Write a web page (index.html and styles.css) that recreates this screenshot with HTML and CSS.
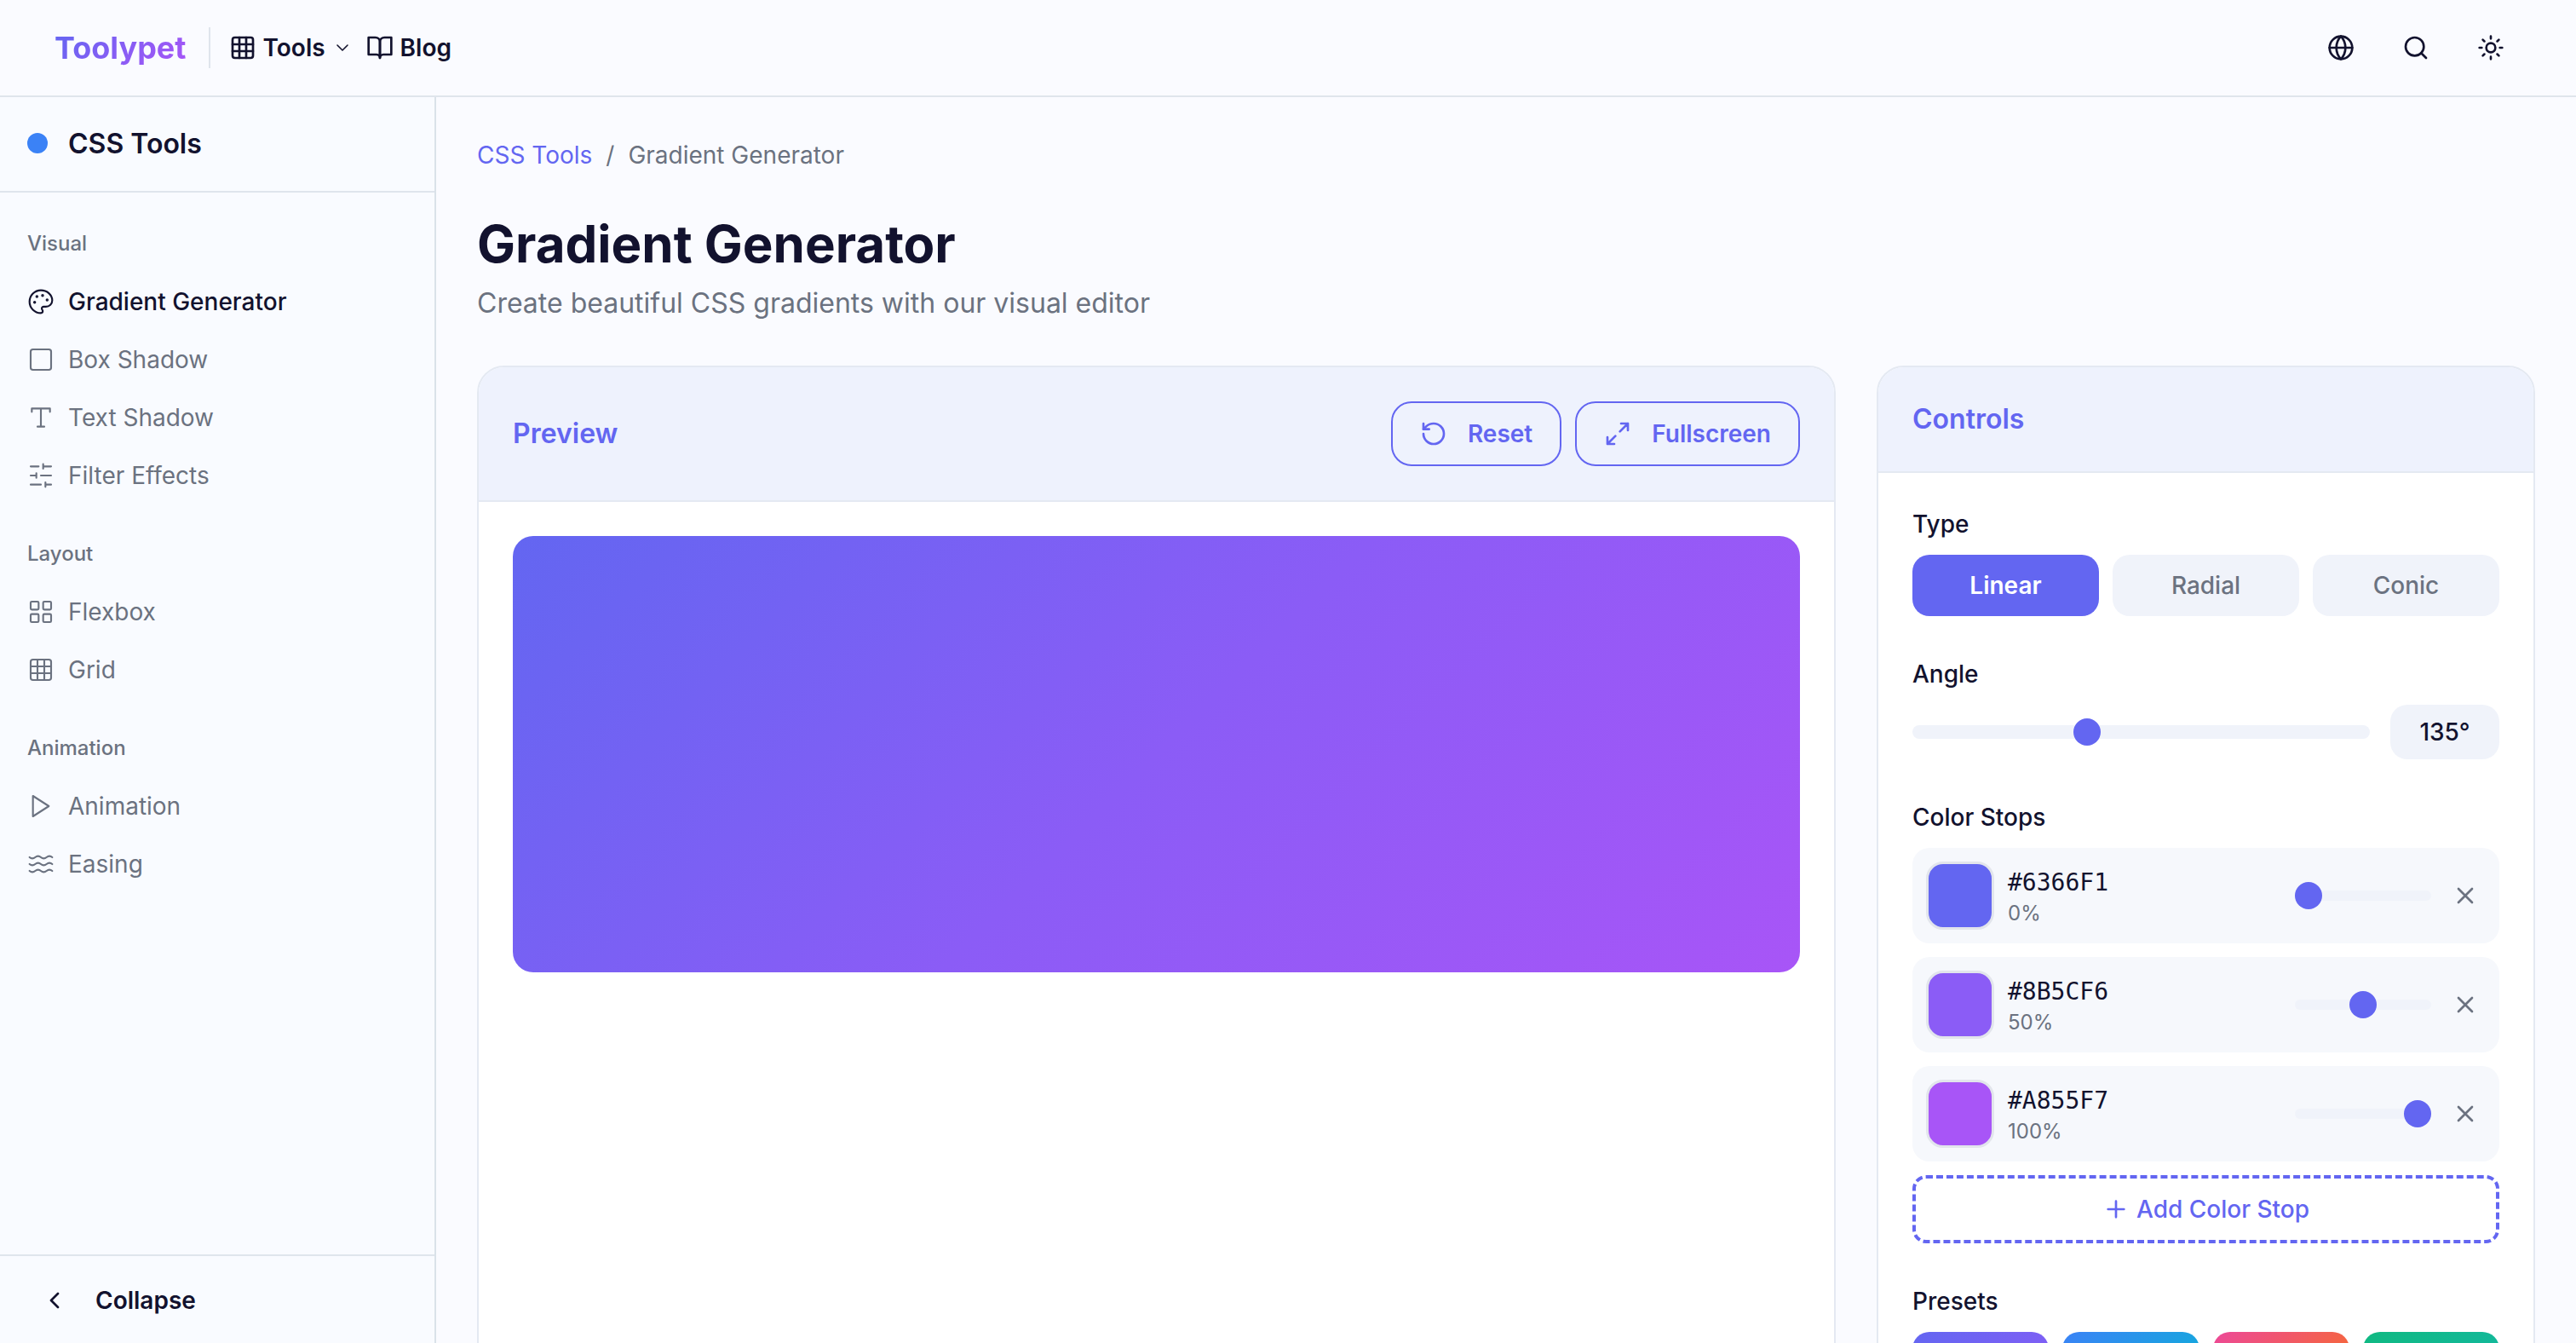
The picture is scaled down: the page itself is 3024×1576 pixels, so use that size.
FILE: index.html
```html
<!DOCTYPE html>
<html>
<head>
  <meta charset="utf-8">
  <title>Gradient Generator</title>
  <link rel="stylesheet" href="styles.css">
</head>
<body>
  <svg class="icon-defs" width="0" height="0">
    <symbol id="i-grid" viewBox="0 0 24 24"><rect x="3" y="3" width="18" height="18" rx="2"/><path d="M3 9h18M3 15h18M9 3v18M15 3v18"/></symbol>
    <symbol id="i-x" viewBox="0 0 24 24"><path d="M18 6 6 18M6 6l12 12"/></symbol>
  </svg>

  <header class="topbar">
    <div class="topbar-left">
      <a class="logo">Toolypet</a>
      <span class="topbar-divider"></span>
      <a class="topnav-link">
        <svg class="icon"><use href="#i-grid"/></svg>
        <span>Tools</span>
        <svg class="icon-small" viewBox="0 0 24 24"><path d="m6 9 6 6 6-6"/></svg>
      </a>
      <a class="topnav-link blog-link">
        <svg class="icon" viewBox="0 0 24 24"><path d="M2 3h6a4 4 0 0 1 4 4v14a3 3 0 0 0-3-3H2z"/><path d="M22 3h-6a4 4 0 0 0-4 4v14a3 3 0 0 1 3-3h7z"/></svg>
        <span>Blog</span>
      </a>
    </div>
    <div class="topbar-right">
      <button class="icon-btn"><svg class="icon" viewBox="0 0 24 24"><circle cx="12" cy="12" r="10"/><path d="M12 2a14.5 14.5 0 0 0 0 20 14.5 14.5 0 0 0 0-20"/><path d="M2 12h20"/></svg></button>
      <button class="icon-btn"><svg class="icon" viewBox="0 0 24 24"><circle cx="11" cy="11" r="8"/><path d="m21 21-4.3-4.3"/></svg></button>
      <button class="icon-btn"><svg class="icon" viewBox="0 0 24 24"><circle cx="12" cy="12" r="4"/><path d="M12 2v2M12 20v2M4.93 4.93l1.41 1.41M17.66 17.66l1.41 1.41M2 12h2M20 12h2M6.34 17.66l-1.41 1.41M19.07 4.93l-1.41 1.41"/></svg></button>
    </div>
  </header>

  <div class="layout">
    <aside class="sidebar">
      <div class="sidebar-head">
        <span class="sidebar-dot"></span>
        <span class="sidebar-title">CSS Tools</span>
      </div>

      <nav class="sidebar-nav">
        <div class="nav-group">
          <div class="nav-label">Visual</div>
          <a class="nav-item active">
            <svg class="icon" viewBox="0 0 24 24"><circle class="dot" cx="13.5" cy="6.5" r=".5"/><circle class="dot" cx="17.5" cy="10.5" r=".5"/><circle class="dot" cx="8.5" cy="7.5" r=".5"/><circle class="dot" cx="6.5" cy="12.5" r=".5"/><path d="M12 2C6.5 2 2 6.5 2 12s4.5 10 10 10c.926 0 1.648-.746 1.648-1.688 0-.437-.18-.835-.437-1.125-.29-.289-.438-.652-.438-1.125a1.64 1.64 0 0 1 1.668-1.668h1.996c3.051 0 5.555-2.503 5.555-5.554C21.965 6.012 17.461 2 12 2z"/></svg>
            Gradient Generator
          </a>
          <a class="nav-item">
            <svg class="icon" viewBox="0 0 24 24"><rect x="3" y="3" width="18" height="18" rx="2"/></svg>
            Box Shadow
          </a>
          <a class="nav-item">
            <svg class="icon" viewBox="0 0 24 24"><path d="M4 7V4h16v3M9 20h6M12 4v16"/></svg>
            Text Shadow
          </a>
          <a class="nav-item">
            <svg class="icon" viewBox="0 0 24 24"><path d="M21 4h-7M10 4H3M21 12h-9M8 12H3M21 20h-5M12 20H3M14 2v4M8 10v4M16 18v4"/></svg>
            Filter Effects
          </a>
        </div>

        <div class="nav-group">
          <div class="nav-label">Layout</div>
          <a class="nav-item">
            <svg class="icon" viewBox="0 0 24 24"><rect x="3" y="3" width="7" height="7" rx="1"/><rect x="14" y="3" width="7" height="7" rx="1"/><rect x="14" y="14" width="7" height="7" rx="1"/><rect x="3" y="14" width="7" height="7" rx="1"/></svg>
            Flexbox
          </a>
          <a class="nav-item">
            <svg class="icon"><use href="#i-grid"/></svg>
            Grid
          </a>
        </div>

        <div class="nav-group">
          <div class="nav-label">Animation</div>
          <a class="nav-item">
            <svg class="icon" viewBox="0 0 24 24"><path d="m5 3 14 9-14 9V3z"/></svg>
            Animation
          </a>
          <a class="nav-item">
            <svg class="icon" viewBox="0 0 24 24"><path d="M2 6c.6.5 1.2 1 2.5 1C7 7 7 5 9.5 5c2.6 0 2.4 2 5 2 2.5 0 2.5-2 5-2 1.3 0 1.9.5 2.5 1"/><path d="M2 12c.6.5 1.2 1 2.5 1 2.5 0 2.5-2 5-2 2.6 0 2.4 2 5 2 2.5 0 2.5-2 5-2 1.3 0 1.9.5 2.5 1"/><path d="M2 18c.6.5 1.2 1 2.5 1 2.5 0 2.5-2 5-2 2.6 0 2.4 2 5 2 2.5 0 2.5-2 5-2 1.3 0 1.9.5 2.5 1"/></svg>
            Easing
          </a>
        </div>
      </nav>

      <div class="sidebar-foot">
        <svg class="icon" viewBox="0 0 24 24"><path d="m15 18-6-6 6-6"/></svg>
        <span>Collapse</span>
      </div>
    </aside>

    <main class="content">
      <div class="breadcrumb">
        <a class="crumb-link">CSS Tools</a>
        <span class="crumb-sep">/</span>
        <span>Gradient Generator</span>
      </div>

      <h1 class="page-title">Gradient Generator</h1>
      <p class="page-sub">Create beautiful CSS gradients with our visual editor</p>

      <div class="panels">
        <section class="card">
          <div class="card-head">
            <h2 class="card-title">Preview</h2>
            <div class="card-actions">
              <button class="outline-btn">
                <svg class="icon" viewBox="0 0 24 24"><path d="M3 12a9 9 0 1 0 9-9 9.75 9.75 0 0 0-6.74 2.74L3 8"/><path d="M3 3v5h5"/></svg>
                Reset
              </button>
              <button class="outline-btn">
                <svg class="icon" viewBox="0 0 24 24"><path d="M15 3h6v6M9 21H3v-6M21 3l-7 7M3 21l7-7"/></svg>
                Fullscreen
              </button>
            </div>
          </div>
          <div class="card-body">
            <div class="gradient-preview"></div>
          </div>
        </section>

        <section class="card">
          <div class="card-head">
            <h2 class="card-title">Controls</h2>
          </div>
          <div class="card-body">
            <div class="control-group">
              <div class="control-label">Type</div>
              <div class="type-tabs">
                <button class="type-tab active">Linear</button>
                <button class="type-tab">Radial</button>
                <button class="type-tab">Conic</button>
              </div>
            </div>

            <div class="control-group">
              <div class="control-label">Angle</div>
              <div class="angle-row">
                <input class="slider" type="range" min="0" max="360" value="135">
                <div class="angle-value">135°</div>
              </div>
            </div>

            <div class="control-group">
              <div class="control-label">Color Stops</div>
              <div class="stops">
                <div class="stop-row">
                  <span class="swatch swatch-1"></span>
                  <div class="stop-info">
                    <div class="stop-hex">#6366F1</div>
                    <div class="stop-pos">0%</div>
                  </div>
                  <input class="slider stop-slider" type="range" min="0" max="100" value="0">
                  <button class="stop-remove"><svg class="icon"><use href="#i-x"/></svg></button>
                </div>
                <div class="stop-row">
                  <span class="swatch swatch-2"></span>
                  <div class="stop-info">
                    <div class="stop-hex">#8B5CF6</div>
                    <div class="stop-pos">50%</div>
                  </div>
                  <input class="slider stop-slider" type="range" min="0" max="100" value="50">
                  <button class="stop-remove"><svg class="icon"><use href="#i-x"/></svg></button>
                </div>
                <div class="stop-row">
                  <span class="swatch swatch-3"></span>
                  <div class="stop-info">
                    <div class="stop-hex">#A855F7</div>
                    <div class="stop-pos">100%</div>
                  </div>
                  <input class="slider stop-slider" type="range" min="0" max="100" value="100">
                  <button class="stop-remove"><svg class="icon"><use href="#i-x"/></svg></button>
                </div>
                <button class="add-stop">
                  <svg class="icon" viewBox="0 0 24 24"><path d="M5 12h14M12 5v14"/></svg>
                  Add Color Stop
                </button>
              </div>
            </div>

            <div class="control-group">
              <div class="control-label">Presets</div>
              <div class="presets">
                <span class="preset preset-1"></span>
                <span class="preset preset-2"></span>
                <span class="preset preset-3"></span>
                <span class="preset preset-4"></span>
              </div>
            </div>
          </div>
        </section>
      </div>
    </main>
  </div>
</body>
</html>
```

FILE: styles.css
```css
* {
  box-sizing: border-box;
}
html, body {
  height: 100%;
}
body {
  margin: 0;
  display: flex;
  flex-direction: column;
  overflow: hidden;
  background-color: #fafbff;
  color: #12122e;
  font-family: Inter, "Liberation Sans", sans-serif;
}
button {
  font-family: inherit;
  cursor: pointer;
}
svg {
  fill: none;
  stroke: currentColor;
  stroke-width: 2;
  stroke-linecap: round;
  stroke-linejoin: round;
  flex-shrink: 0;
}
.icon-defs {
  position: absolute;
}
.icon {
  width: 32px;
  height: 32px;
}
.icon-small {
  width: 24px;
  height: 24px;
  stroke-width: 1.6;
}
.dot {
  fill: currentColor;
}

/* top bar */
.topbar {
  height: 114px;
  flex-shrink: 0;
  display: flex;
  align-items: center;
  justify-content: space-between;
  padding: 0 68px 0 64px;
  border-bottom: 2px solid #dfe5ec;
  background-color: #fafbff;
}
.topbar-left {
  display: flex;
  align-items: center;
}
.logo {
  font-size: 36px;
  font-weight: 700;
  background: linear-gradient(135deg, #6366f1, #a855f7);
  -webkit-background-clip: text;
  background-clip: text;
  color: transparent;
}
.topbar-divider {
  width: 2px;
  height: 48px;
  margin: 0 22px 0 26px;
  background-color: #dfe5ec;
}
.topnav-link {
  display: flex;
  align-items: center;
  gap: 8px;
  font-size: 28px;
  font-weight: 600;
}
.blog-link {
  margin-left: 16px;
}
.topbar-right {
  display: flex;
  gap: 24px;
}
.icon-btn {
  width: 64px;
  height: 64px;
  display: flex;
  align-items: center;
  justify-content: center;
  padding: 0;
  border: none;
  background: none;
  color: #12122e;
}

.layout {
  flex: 1;
  min-height: 0;
  display: flex;
}

/* sidebar */
.sidebar {
  width: 512px;
  flex-shrink: 0;
  display: flex;
  flex-direction: column;
  border-right: 2px solid #dae2e9;
  background-color: #f9fbff;
}
.sidebar-head {
  height: 112px;
  display: flex;
  align-items: center;
  gap: 24px;
  padding: 0 32px 2px;
  border-bottom: 2px solid #dfe5ec;
}
.sidebar-dot {
  width: 24px;
  height: 24px;
  border-radius: 50%;
  background-color: #3b82f6;
}
.sidebar-title {
  font-size: 32px;
  font-weight: 600;
}
.sidebar-nav {
  flex: 1;
  padding: 40px 32px 0;
}
.nav-group {
  margin-bottom: 38px;
}
.nav-label {
  height: 40px;
  line-height: 40px;
  margin-bottom: 14px;
  font-size: 24px;
  font-weight: 500;
  color: #6b7280;
}
.nav-item {
  height: 68px;
  display: flex;
  align-items: center;
  gap: 16px;
  font-size: 28px;
  font-weight: 400;
  color: #6b7280;
}
.nav-item .icon {
  stroke-width: 1.6;
}
.nav-item.active {
  color: #12122e;
  font-weight: 500;
}
.sidebar-foot {
  height: 104px;
  display: flex;
  align-items: center;
  gap: 32px;
  padding: 2px 48px 0;
  border-top: 2px solid #dfe5ec;
  font-size: 28px;
  font-weight: 600;
}

/* main area */
.content {
  flex: 1;
  min-width: 0;
  padding: 48px 48px 0;
}
.breadcrumb {
  display: flex;
  gap: 16px;
  line-height: 40px;
  font-size: 28px;
  color: #6b7280;
}
.crumb-link {
  color: #6366f1;
}
.page-title {
  margin: 46px 0 0;
  font-size: 60px;
  line-height: 76px;
  font-weight: 700;
}
.page-sub {
  margin: 10px 0 0;
  font-size: 32px;
  line-height: 44px;
  color: #6b7280;
}
.panels {
  margin-top: 51px;
  display: grid;
  grid-template-columns: 1fr 773px;
  gap: 48px;
  align-items: start;
}
.card {
  border: 2px solid #e4e9f2;
  border-radius: 32px;
  background-color: #ffffff;
  overflow: hidden;
  min-height: 1400px;
}
.card-head {
  display: flex;
  align-items: center;
  justify-content: space-between;
  padding: 40px;
  border-bottom: 2px solid #e4e9f2;
  background-color: #eef2fd;
}
.card-title {
  margin: 0;
  font-size: 32px;
  line-height: 42px;
  font-weight: 600;
  color: #6366f1;
}
.card-actions {
  display: flex;
  gap: 16px;
}
.outline-btn {
  height: 76px;
  display: flex;
  align-items: center;
  gap: 24px;
  padding: 0 32px;
  border: 2px solid #6366f1;
  border-radius: 24px;
  background: none;
  color: #6366f1;
  font-size: 28px;
  font-weight: 600;
}
.card-body {
  padding: 40px;
}
.gradient-preview {
  height: 512px;
  border-radius: 24px;
  background: linear-gradient(135deg, #6366f1 0%, #8b5cf6 50%, #a855f7 100%);
}

/* controls */
.control-group {
  margin-bottom: 48px;
}
.control-label {
  height: 40px;
  line-height: 40px;
  margin-bottom: 16px;
  font-size: 28px;
  font-weight: 500;
}
.type-tabs {
  display: grid;
  grid-template-columns: repeat(3, 1fr);
  gap: 16px;
}
.type-tab {
  height: 72px;
  border: none;
  border-radius: 20px;
  background-color: #f0f3fa;
  color: #6b7280;
  font-size: 28px;
  font-weight: 500;
}
.type-tab.active {
  background-color: #6366f1;
  color: #ffffff;
  font-weight: 600;
}
.angle-row {
  display: flex;
  align-items: center;
  gap: 24px;
}
.slider {
  -webkit-appearance: none;
  appearance: none;
  flex: 1;
  min-width: 0;
  height: 16px;
  margin: 0;
  border-radius: 8px;
  background-color: #f0f3fa;
}
.slider::-webkit-slider-thumb {
  -webkit-appearance: none;
  appearance: none;
  width: 32px;
  height: 32px;
  border: none;
  border-radius: 50%;
  background-color: #6366f1;
}
.angle-value {
  width: 128px;
  height: 64px;
  display: flex;
  align-items: center;
  justify-content: center;
  border-radius: 20px;
  background-color: #f0f3fa;
  font-size: 28px;
  font-weight: 500;
}
.stops {
  display: flex;
  flex-direction: column;
  gap: 16px;
}
.stop-row {
  height: 112px;
  display: flex;
  align-items: center;
  gap: 16px;
  padding: 0 16px;
  border-radius: 20px;
  background-color: #f6f8fc;
}
.swatch {
  width: 80px;
  height: 80px;
  flex-shrink: 0;
  border: 3px solid #e2e5ec;
  border-radius: 20px;
}
.swatch-1 { background-color: #6366f1; }
.swatch-2 { background-color: #8b5cf6; }
.swatch-3 { background-color: #a855f7; }
.stop-info {
  flex: 1;
  padding-top: 6px;
}
.stop-hex {
  font-family: "DejaVu Sans Mono", monospace;
  font-size: 28px;
  line-height: 36px;
}
.stop-pos {
  font-size: 24px;
  line-height: 36px;
  color: #6b7280;
}
.stop-slider {
  flex: none;
  width: 160px;
  height: 12px;
  border-radius: 6px;
}
.stop-remove {
  width: 48px;
  height: 48px;
  display: flex;
  align-items: center;
  justify-content: center;
  padding: 0;
  border: none;
  background: none;
  color: #6b7280;
}
.add-stop {
  height: 80px;
  display: flex;
  align-items: center;
  justify-content: center;
  gap: 8px;
  border: 4px dashed #6366f1;
  border-radius: 16px;
  background: none;
  color: #6366f1;
  font-size: 28px;
  font-weight: 500;
}
.presets {
  display: grid;
  grid-template-columns: repeat(4, 1fr);
  gap: 16px;
}
.preset {
  height: 96px;
  border-radius: 20px;
}
.preset-1 { background: linear-gradient(135deg, #6366f1, #8b5cf6); }
.preset-2 { background: linear-gradient(135deg, #3b82f6, #06b6d4); }
.preset-3 { background: linear-gradient(135deg, #ec4899, #f97316); }
.preset-4 { background: linear-gradient(135deg, #10b981, #14b8a6); }
```
